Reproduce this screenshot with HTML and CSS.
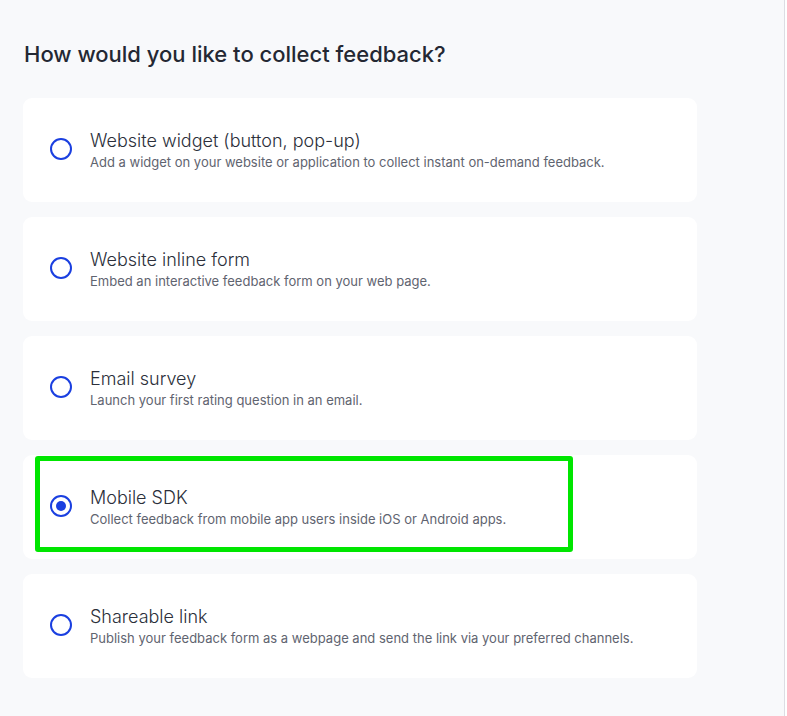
FILE: index.html
```html
<!DOCTYPE html>
<html>
<head>
<meta charset="utf-8">
<link rel="stylesheet" href="styles.css">
</head>
<body>
<div class="page">
  <h1 class="heading">How would you like to collect feedback?</h1>
  <div class="options">
    <div class="card">
      <span class="radio"></span>
      <div class="text">
        <div class="title">Website widget (button, pop-up)</div>
        <div class="desc">Add a widget on your website or application to collect instant on-demand feedback.</div>
      </div>
    </div>
    <div class="card">
      <span class="radio"></span>
      <div class="text">
        <div class="title">Website inline form</div>
        <div class="desc">Embed an interactive feedback form on your web page.</div>
      </div>
    </div>
    <div class="card">
      <span class="radio"></span>
      <div class="text">
        <div class="title">Email survey</div>
        <div class="desc">Launch your first rating question in an email.</div>
      </div>
    </div>
    <div class="card">
      <span class="radio checked"></span>
      <div class="text">
        <div class="title">Mobile SDK</div>
        <div class="desc">Collect feedback from mobile app users inside iOS or Android apps.</div>
      </div>
      <div class="highlight"></div>
    </div>
    <div class="card">
      <span class="radio"></span>
      <div class="text">
        <div class="title">Shareable link</div>
        <div class="desc">Publish your feedback form as a webpage and send the link via your preferred channels.</div>
      </div>
    </div>
  </div>
</div>
</body>
</html>
```
FILE: styles.css
```css
html, body {
  margin: 0;
  padding: 0;
  background: #ffffff;
}
body {
  font-family: Inter, "Liberation Sans", sans-serif;
}
.page {
  width: 785px;
  height: 716px;
  box-sizing: border-box;
  background: #f8f9fb;
  border-right: 1px solid #dcdde3;
  padding: 42px 0 0 23px;
}
.heading {
  margin: 0 0 32px 1px;
  font-family: Inter, sans-serif;
  font-size: 22px;
  line-height: 24px;
  font-weight: 500;
  color: #242833;
}
.options {
  display: flex;
  flex-direction: column;
  gap: 15px;
  width: 674px;
}
.card {
  position: relative;
  height: 104px;
  box-sizing: border-box;
  background: #ffffff;
  border-radius: 9px;
  display: flex;
  align-items: center;
  padding-left: 27px;
  gap: 18px;
}
.radio {
  flex: none;
  width: 22px;
  height: 22px;
  box-sizing: border-box;
  border: 2px solid #1a3fe0;
  border-radius: 50%;
  display: flex;
  align-items: center;
  justify-content: center;
  margin-top: -3px;
}
.radio.checked::after {
  content: "";
  width: 10px;
  height: 10px;
  border-radius: 50%;
  background: #1a3fe0;
}
.text {
  display: flex;
  flex-direction: column;
  gap: 1px;
}
.title {
  font-size: 18px;
  line-height: 23px;
  font-weight: 300;
  color: #2b2f3a;
}
.desc {
  font-size: 13px;
  line-height: 18px;
  font-weight: 400;
  color: #5f6470;
}
.highlight {
  position: absolute;
  left: 12px;
  top: 1px;
  width: 538px;
  height: 96px;
  box-sizing: border-box;
  border: 5px solid #00e600;
  border-radius: 3px;
  pointer-events: none;
}
```
